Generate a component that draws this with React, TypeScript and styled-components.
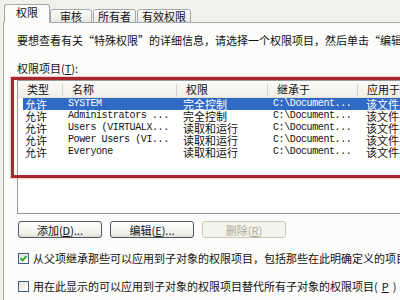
import React from 'react';
import styled, { createGlobalStyle } from 'styled-components';

const Global = createGlobalStyle`
  html, body { margin: 0; padding: 0; background: #f1f0ea; }
  #root { width: 400px; height: 300px; }
`;

const Window = styled.div`
  position: relative;
  width: 400px;
  height: 300px;
  overflow: hidden;
  background: #f1f0ea;
  display: flex;
  flex-direction: column;
  font-family: "Noto Sans CJK SC", "Liberation Sans", sans-serif;
  font-size: 11px;
  color: #111;
`;

const TabStrip = styled.div`
  display: flex;
  align-items: flex-end;
  height: 23px;
  padding-left: 4px;
  position: relative;
  z-index: 1;
  margin-bottom: -1px;
`;

const Tab = styled.div<{ $active?: boolean; $w: number }>`
  box-sizing: border-box;
  width: ${p => p.$w}px;
  height: ${p => (p.$active ? 19 : 14)}px;
  margin-right: ${p => (p.$active ? 0 : 1)}px;
  border: 1px solid #a3a9ab;
  border-bottom: ${p => (p.$active ? '1px solid #fcfcfa' : '1px solid #a3a9ab')};
  border-radius: 3px 3px 0 0;
  background: ${p => (p.$active ? '#fcfcfa' : 'linear-gradient(#fdfdfc, #e9e8e2)')};
  display: flex;
  align-items: center;
  justify-content: center;
  line-height: 12px;
  padding-bottom: ${p => (p.$active ? 3 : 0)}px;
  color: #111;
`;

const Panel = styled.div`
  flex: 1;
  margin-left: 3px;
  border-left: 1px solid #a3a9ab;
  border-top: 1px solid #a3a9ab;
  background: #fcfcfa;
  padding: 11px 0 0 13px;
  display: flex;
  flex-direction: column;
  overflow: hidden;
`;

const Line = styled.div<{ $mt?: number }>`
  white-space: nowrap;
  line-height: 13px;
  height: 13px;
  margin-top: ${p => p.$mt ?? 0}px;
`;

const ListBox = styled.div`
  margin-top: 5px;
  width: 420px;
  height: 134px;
  box-sizing: border-box;
  border: 1px solid #9a9a9a;
  background: #fff;
  display: flex;
  flex-direction: column;
`;

const Header = styled.div`
  display: grid;
  grid-template-columns: 45px 114px 91px 90px 1fr;
  height: 17px;
  background: linear-gradient(#fbfbf9, #efeee8);
  border-bottom: 1px solid #e2e0d6;
  box-sizing: border-box;
`;

const HeadCell = styled.div<{ $sep?: boolean }>`
  position: relative;
  padding-left: 9px;
  line-height: 17px;
  white-space: nowrap;
  &::after {
    content: '';
    display: ${p => (p.$sep ? 'block' : 'none')};
    position: absolute;
    right: 0;
    top: 3px;
    bottom: 2px;
    width: 1px;
    background: #d6d4ca;
  }
`;

const Row = styled.div<{ $sel?: boolean }>`
  display: grid;
  grid-template-columns: 40px 114px 91px 90px 1fr;
  margin-left: 5px;
  height: 12px;
  line-height: 12px;
  background: ${p => (p.$sel ? '#316ac5' : 'transparent')};
  color: ${p => (p.$sel ? '#fff' : '#111')};
`;

const Cell = styled.div<{ $mono?: boolean; $pl: number }>`
  padding-left: ${p => p.$pl}px;
  white-space: nowrap;
  overflow-x: clip;
  overflow-y: visible;
  font-family: ${p => (p.$mono ? '"Liberation Mono", "Noto Sans CJK SC", monospace' : '"Noto Sans CJK SC", sans-serif')};
  font-size: ${p => (p.$mono ? '10px' : '11px')};
  letter-spacing: ${p => (p.$mono ? '-0.4px' : '0')};
`;

const Buttons = styled.div`
  display: flex;
  gap: 8px;
  margin-top: 7px;
  padding-left: 1px;
`;

const Button = styled.div<{ $disabled?: boolean }>`
  box-sizing: border-box;
  width: 84px;
  height: 17px;
  border: 1px solid ${p => (p.$disabled ? '#cac8bb' : '#4b5866')};
  border-radius: 3px;
  background: ${p => (p.$disabled ? '#f5f4ea' : 'linear-gradient(#ffffff, #f0f0ea 80%, #dcdbd3)')};
  color: ${p => (p.$disabled ? '#aca899' : '#111')};
  display: flex;
  align-items: center;
  justify-content: center;
  line-height: 12px;
  white-space: nowrap;
`;

const Check = styled.label<{ $mt: number }>`
  display: flex;
  align-items: center;
  gap: 4px;
  margin-top: ${p => p.$mt}px;
  padding-left: 1px;
  height: 13px;
  white-space: nowrap;
  line-height: 13px;
`;

const Box = styled.span`
  box-sizing: border-box;
  width: 11px;
  height: 11px;
  flex: none;
  border: 1px solid #3d5f82;
  background: linear-gradient(135deg, #e4e3dc, #ffffff);
  display: flex;
  align-items: center;
  justify-content: center;
`;

const Annotation = styled.div`
  position: absolute;
  left: 11px;
  top: 77px;
  width: 400px;
  height: 101px;
  box-sizing: border-box;
  border: 3px solid #a8262c;
  box-shadow: 0 0 1px 1px rgba(220, 120, 120, 0.35);
  pointer-events: none;
  z-index: 5;
`;

const rows = [
  { type: '允许', name: 'SYSTEM', perm: '完全控制', from: 'C:\\Document...', to: '该文件夹' },
  { type: '允许', name: 'Administrators ...', perm: '完全控制', from: 'C:\\Document...', to: '该文件夹' },
  { type: '允许', name: 'Users (VIRTUALX...', perm: '读取和运行', from: 'C:\\Document...', to: '该文件夹' },
  { type: '允许', name: 'Power Users (VI...', perm: '读取和运行', from: 'C:\\Document...', to: '该文件夹' },
  { type: '允许', name: 'Everyone', perm: '读取和运行', from: 'C:\\Document...', to: '该文件夹' },
];

export default function App() {
  return (
    <Window>
      <Global />
      <TabStrip>
        <Tab $active $w={46}>权限</Tab>
        <Tab $w={42}>审核</Tab>
        <Tab $w={43}>所有者</Tab>
        <Tab $w={54}>有效权限</Tab>
      </TabStrip>
      <Panel>
        <Line>要想查看有关“特殊权限”的详细信息，请选择一个权限项目，然后单击“编辑”。</Line>
        <Line $mt={15}>权限项目(<u>T</u>):</Line>
        <ListBox>
          <Header>
            <HeadCell $sep>类型</HeadCell>
            <HeadCell $sep>名称</HeadCell>
            <HeadCell $sep>权限</HeadCell>
            <HeadCell $sep>继承于</HeadCell>
            <HeadCell>应用于</HeadCell>
          </Header>
          {rows.map((r, i) => (
            <Row key={i} $sel={i === 0}>
              <Cell $pl={2}>{r.type}</Cell>
              <Cell $mono $pl={5}>{r.name}</Cell>
              <Cell $pl={6}>{r.perm}</Cell>
              <Cell $mono $pl={5}>{r.from}</Cell>
              <Cell $pl={8}>{r.to}</Cell>
            </Row>
          ))}
        </ListBox>
        <Buttons>
          <Button>添加(<u>D</u>)...</Button>
          <Button>编辑(<u>E</u>)...</Button>
          <Button $disabled>删除(<u>R</u>)</Button>
        </Buttons>
        <Check $mt={14}>
          <Box>
            <svg width="9" height="9" viewBox="0 0 9 9">
              <path d="M1.5 4.2 L3.6 6.5 L7.6 1.8" fill="none" stroke="#21a121" strokeWidth="1.8" />
            </svg>
          </Box>
          从父项继承那些可以应用到子对象的权限项目，包括那些在此明确定义的项目
        </Check>
        <Check $mt={15}>
          <Box />
          用在此显示的可以应用到子对象的权限项目替代所有子对象的权限项目(<u>P</u>)
        </Check>
      </Panel>
      <Annotation />
    </Window>
  );
}
